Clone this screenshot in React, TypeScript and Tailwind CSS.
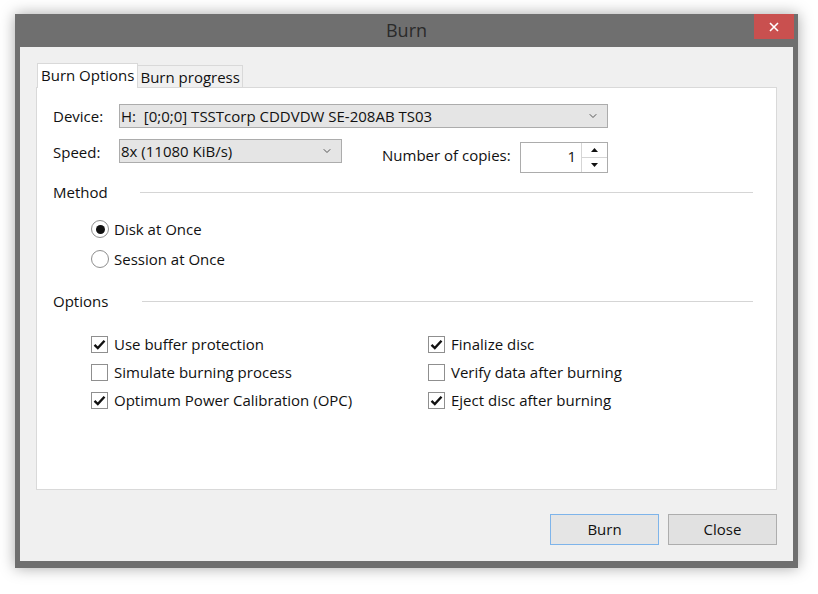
import { ChevronDown } from 'lucide-react';

const Check = () => (
  <svg width="13" height="11" viewBox="0 0 13 11" className="block">
    <path d="M1.5 5.8 L4.8 9 L11.5 1.8" fill="none" stroke="#111" strokeWidth="2.4" />
  </svg>
);

const CheckBox = ({ label, checked }: { label: string; checked: boolean }) => (
  <div className="flex items-center h-[28px]">
    <div className="w-[17px] h-[17px] border border-[#8f8f8f] bg-white flex items-center justify-center">
      {checked && <Check />}
    </div>
    <span className="ml-[6px]">{label}</span>
  </div>
);

const Radio = ({ label, checked }: { label: string; checked: boolean }) => (
  <div className="flex items-center h-[30px]">
    <div className="w-[18px] h-[18px] rounded-full border border-[#8f8f8f] bg-white flex items-center justify-center">
      {checked && <div className="w-[9px] h-[9px] rounded-full bg-[#111]" />}
    </div>
    <span className="ml-[5px]">{label}</span>
  </div>
);

const GroupTitle = ({ label, lineLeft }: { label: string; lineLeft: string }) => (
  <div className="flex items-center h-[20px] pr-[23px]">
    <span className={lineLeft}>{label}</span>
    <div className="flex-1 h-px bg-[#d5d5d5]" />
  </div>
);

const App = () => {
  return (
    <div className="w-[818px] h-[594px] bg-white pt-[14px] pl-[15px] overflow-hidden font-['Open_Sans',sans-serif] text-[15px] text-[#111]">
      <div className="w-[783px] h-[554px] bg-[#6f6f6f] flex flex-col shadow-[0_0_14px_rgba(0,0,0,0.35)]">
        <div className="h-[33px] relative flex items-center justify-center">
          <span className="text-[18px] text-[#2a2a2a]">Burn</span>
          <div className="absolute right-[4px] top-0 w-[40px] h-[25px] bg-[#c9504f] flex items-center justify-center">
            <svg width="10" height="10" viewBox="0 0 10 10">
              <path d="M1 1 L9 9 M9 1 L1 9" stroke="#fff" strokeWidth="1.6" />
            </svg>
          </div>
        </div>
        <div className="mx-[5px] mb-[7px] flex-1 bg-[#f0f0f0] px-[16px] pt-[16px] flex flex-col">
          <div className="flex items-end h-[24px] pl-px">
            <div className="h-[25px] px-[3px] bg-white border border-b-0 border-[#d9d9d9] relative z-10 -mb-px leading-[23px]">
              Burn Options
            </div>
            <div className="h-[22px] px-[2px] bg-[#f0f0f0] border border-b-0 border-l-0 border-[#d9d9d9] leading-[22px]">
              Burn progress
            </div>
          </div>
          <div className="h-[403px] bg-white border border-[#d9d9d9] pl-[16px] pt-[16px] flex flex-col">
            <div className="flex items-center h-[24px]">
              <span className="w-[66px]">Device:</span>
              <div className="w-[489px] h-[24px] bg-[#e5e5e5] border border-[#acacac] flex items-center pl-[1px] pr-[8px]">
                <span className="flex-1 whitespace-pre">H:  [0;0;0] TSSTcorp CDDVDW SE-208AB TS03</span>
                <ChevronDown size={12} strokeWidth={2} color="#555" />
              </div>
            </div>
            <div className="flex items-start mt-[11px] h-[34px]">
              <span className="w-[66px] mt-[2px]">Speed:</span>
              <div className="w-[223px] h-[24px] bg-[#e5e5e5] border border-[#acacac] flex items-center pl-[1px] pr-[8px]">
                <span className="flex-1">8x (11080 KiB/s)</span>
                <ChevronDown size={12} strokeWidth={2} color="#555" />
              </div>
              <span className="ml-[40px] mt-[5px] w-[138px]">Number of copies:</span>
              <div className="mt-[3px] w-[88px] h-[31px] bg-white border border-[#acacac] flex">
                <span className="flex-1 text-right pr-[5px] leading-[27px]">1</span>
                <div className="w-[26px] flex flex-col border-l border-[#d5d5d5]">
                  <div className="flex-1 flex items-center justify-center border-b border-[#d5d5d5]">
                    <svg width="7" height="4" viewBox="0 0 7 4"><path d="M0 4 L3.5 0 L7 4 Z" fill="#111" /></svg>
                  </div>
                  <div className="flex-1 flex items-center justify-center">
                    <svg width="7" height="4" viewBox="0 0 7 4"><path d="M0 0 L3.5 4 L7 0 Z" fill="#111" /></svg>
                  </div>
                </div>
              </div>
            </div>
            <div className="mt-[9px]">
              <GroupTitle label="Method" lineLeft="w-[87px]" />
            </div>
            <div className="pl-[38px] mt-[12px] flex flex-col">
              <Radio label="Disk at Once" checked={true} />
              <Radio label="Session at Once" checked={false} />
            </div>
            <div className="mt-[17px]">
              <GroupTitle label="Options" lineLeft="w-[89px]" />
            </div>
            <div className="pl-[38px] mt-[19px] flex">
              <div className="w-[337px] flex flex-col">
                <CheckBox label="Use buffer protection" checked={true} />
                <CheckBox label="Simulate burning process" checked={false} />
                <CheckBox label="Optimum Power Calibration (OPC)" checked={true} />
              </div>
              <div className="flex flex-col">
                <CheckBox label="Finalize disc" checked={true} />
                <CheckBox label="Verify data after burning" checked={false} />
                <CheckBox label="Eject disc after burning" checked={true} />
              </div>
            </div>
          </div>
          <div className="flex justify-end gap-[9px] mt-[24px]">
            <button className="w-[109px] h-[31px] bg-[#e5e5e5] border border-[#7eb4ea] text-[#111]">Burn</button>
            <button className="w-[109px] h-[31px] bg-[#e1e1e1] border border-[#adadad] text-[#111]">Close</button>
          </div>
        </div>
      </div>
    </div>
  );
};

export default App;
